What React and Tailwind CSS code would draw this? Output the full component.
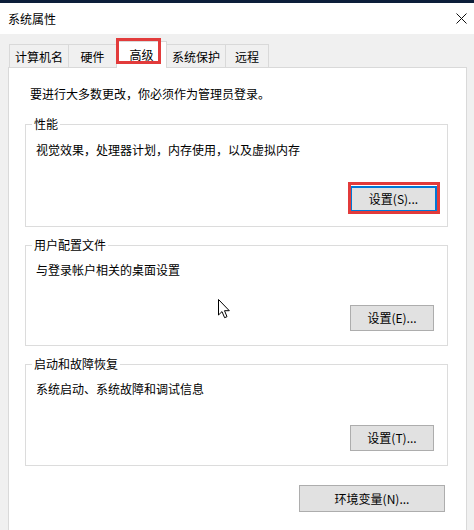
import React from "react";

const font = { fontFamily: '"Noto Sans CJK SC", "Noto Sans", sans-serif' };

function Tab({ label, width, active }) {
  if (active) {
    return (
      <div
        className={`relative z-10 -mb-px -ml-px flex h-[27px] items-center justify-center border border-b-0 border-[#d9d9d9] bg-white text-[12px] leading-[16px] text-black ${width}`}
      >
        {label}
      </div>
    );
  }
  return (
    <div
      className={`-ml-px flex h-[23px] items-center justify-center border border-b-0 border-[#d9d9d9] bg-[#f0f0f0] pt-[1px] text-[12px] leading-[16px] text-black ${width}`}
    >
      {label}
    </div>
  );
}

function WinButton({ label, focused, className = "" }) {
  return (
    <button
      className={`flex h-[26px] items-center justify-center bg-[#e1e1e1] text-[12px] leading-[16px] text-black ${
        focused ? "border-2 border-[#0078d7]" : "border border-[#adadad]"
      } ${className}`}
    >
      {label}
    </button>
  );
}

function Group({ title, desc, button, descGap, btnGap, focused }) {
  return (
    <fieldset className="ml-[16px] w-[423px] border border-[#dcdcdc] pb-[14px]">
      <legend className="ml-[6px] px-[2px] text-[12px] leading-[16px] text-black">{title}</legend>
      <div className={`pl-[10px] text-[12px] leading-[16px] text-black ${descGap}`}>{desc}</div>
      <div className={`flex justify-end ${focused ? "pr-[10px]" : "pr-[13px]"} ${btnGap}`}>
        <div className="relative">
          <WinButton label={button} focused={focused} className={focused ? "w-[87px]" : "w-[84px]"} />
          {focused && (
            <div className="pointer-events-none absolute -left-[2px] -top-[4px] h-[32px] w-[92px] border-[3px] border-[#e23b3b]" />
          )}
        </div>
      </div>
    </fieldset>
  );
}

function ArrowCursor() {
  return (
    <svg width="13" height="20" viewBox="0 0 13 20" className="absolute left-[218px] top-[299px]">
      <path
        d="M0.5 0.5 L0.5 16 L4 12.6 L6.6 18.7 L9 17.7 L6.5 11.7 L11.3 11.7 Z"
        fill="#fff"
        stroke="#000"
        strokeWidth="1"
        strokeLinejoin="miter"
      />
    </svg>
  );
}

export default function App() {
  return (
    <div className="relative h-[530px] w-[474px] overflow-hidden bg-[#f0f0f0]" style={font}>
      {/* window top edge */}
      <div className="h-[3px] bg-[#0c1e3a]" />

      {/* title bar */}
      <div className="flex h-[31px] items-center justify-between bg-white pl-[8px] pr-[7px]">
        <span className="text-[12px] leading-[16px] text-black">系统属性</span>
        <svg width="11" height="11" viewBox="0 0 11 11">
          <path d="M0.5 0.5 L10.5 10.5 M10.5 0.5 L0.5 10.5" stroke="#111" strokeWidth="1" />
        </svg>
      </div>

      {/* tab strip */}
      <div className="mt-[7px] flex h-[26px] items-end pl-[10px]">
        <Tab label="计算机名" width="w-[60px]" />
        <Tab label="硬件" width="w-[49px]" />
        <Tab label="高级" width="w-[51px]" active />
        <Tab label="系统保护" width="w-[60px]" />
        <Tab label="远程" width="w-[44px]" />
      </div>

      {/* tab page */}
      <div className="ml-[8px] h-[480px] w-[459px] border border-[#d9d9d9] bg-white">
        <div className="pl-[21px] pt-[18px] text-[12px] leading-[16px] text-black">
          要进行大多数更改，你必须作为管理员登录。
        </div>

        <div className="mt-[14px]">
          <Group
            title="性能"
            desc="视觉效果，处理器计划，内存使用，以及虚拟内存"
            button="设置(S)..."
            descGap="mt-[10px]"
            btnGap="mt-[28px]"
            focused
          />
        </div>

        <div className="mt-[10px]">
          <Group
            title="用户配置文件"
            desc="与登录帐户相关的桌面设置"
            button="设置(E)..."
            descGap="mt-[9px]"
            btnGap="mt-[27px]"
          />
        </div>

        <div className="mt-[10px]">
          <Group
            title="启动和故障恢复"
            desc="系统启动、系统故障和调试信息"
            button="设置(T)..."
            descGap="mt-[9px]"
            btnGap="mt-[28px]"
          />
        </div>

        <div className="mt-[19px] flex justify-end pr-[21px]">
          <WinButton label="环境变量(N)..." className="h-[27px] w-[146px]" />
        </div>
      </div>

      {/* selected tab highlight */}
      <div className="pointer-events-none absolute left-[116px] top-[38px] z-20 h-[26px] w-[45px] border-[3px] border-[#e23b3b]" />

      <ArrowCursor />
    </div>
  );
}
